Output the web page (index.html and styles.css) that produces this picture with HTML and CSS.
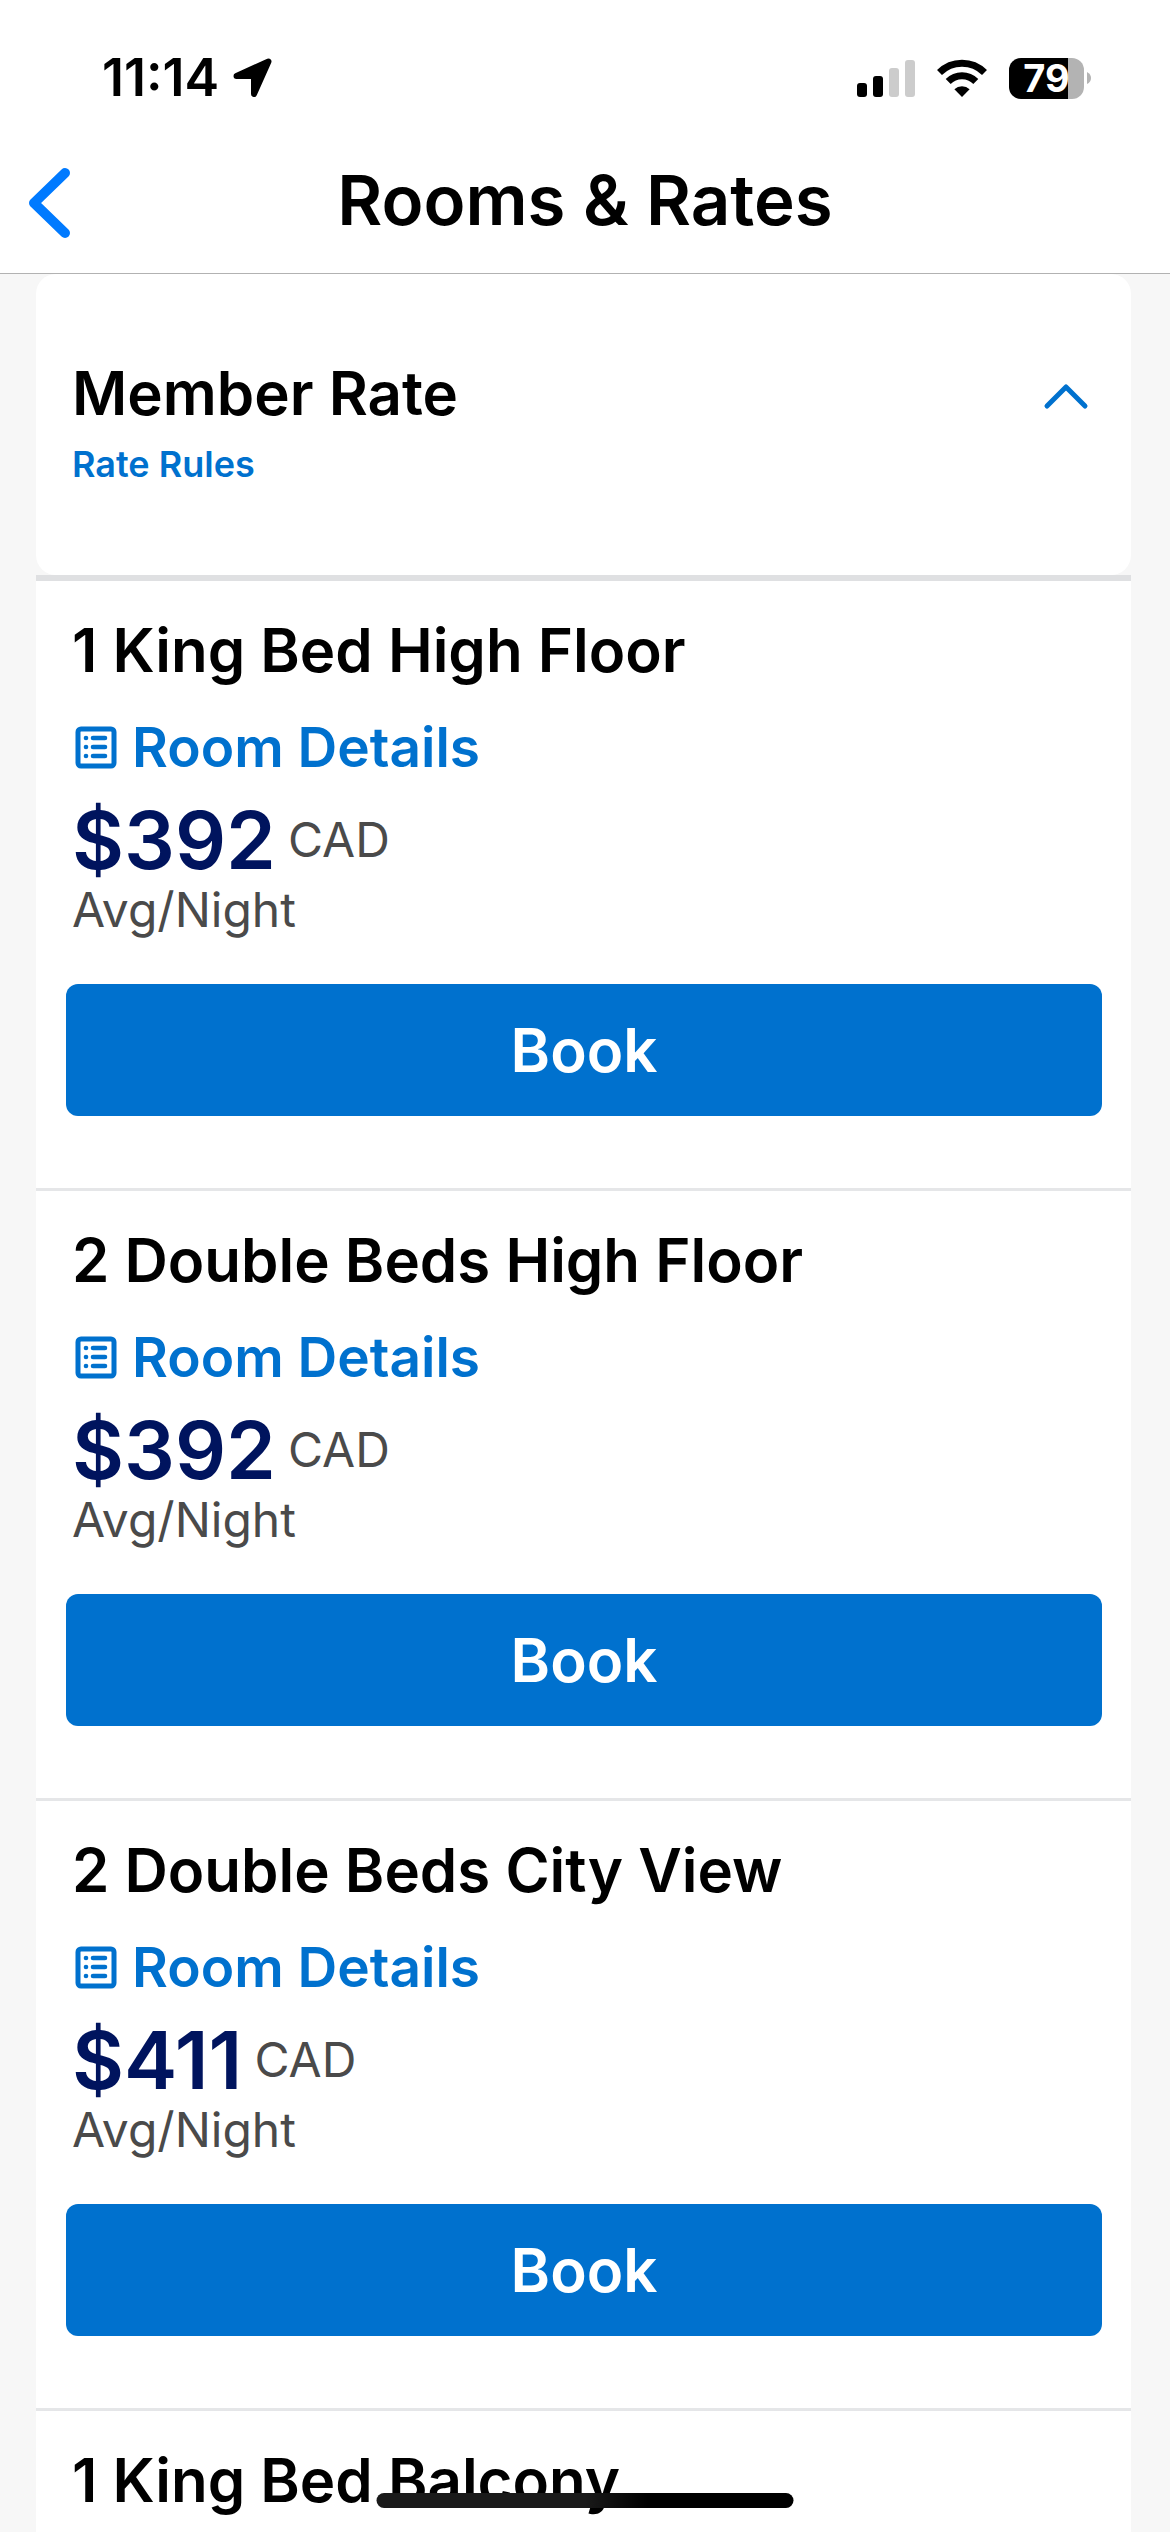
FILE: index.html
```html
<!DOCTYPE html>
<html lang="en">
<head>
  <meta charset="UTF-8">
  <meta name="viewport" content="width=device-width, initial-scale=1.0">
  <title>Rooms &amp; Rates</title>
  <link rel="stylesheet" href="styles.css">
</head>
<body>
  <svg class="sprite" aria-hidden="true">
    <symbol id="icon-list" viewBox="0 0 48 48">
      <rect x="6" y="6" width="36" height="37" rx="3" fill="none" stroke="currentColor" stroke-width="5"/>
      <path d="M21 15h12M21 24h12M21 33h12" fill="none" stroke="currentColor" stroke-width="4.6" stroke-linecap="round"/>
      <circle cx="14" cy="15" r="2.3" fill="currentColor"/>
      <circle cx="14" cy="24" r="2.3" fill="currentColor"/>
      <circle cx="14" cy="33" r="2.3" fill="currentColor"/>
    </symbol>
  </svg>

  <div class="screen">
    <header class="header">
      <div class="status-bar">
        <div class="status-left">
          <span class="time">11:14</span>
          <svg class="location" viewBox="0 0 40 40" aria-hidden="true">
            <path d="M3.500 18 35.500 3.500 21 36V18Z" stroke="#000" stroke-width="6" stroke-linejoin="round"/>
          </svg>
        </div>
        <div class="status-right">
          <svg class="signal" viewBox="0 0 58 38" aria-hidden="true">
            <rect x="0" y="24" width="10" height="14" rx="3"/>
            <rect x="16" y="17" width="10" height="21" rx="3"/>
            <rect x="32" y="9" width="10" height="29" rx="3" fill="#ccc"/>
            <rect x="48" y="1" width="10" height="37" rx="3" fill="#ccc"/>
          </svg>
          <svg class="wifi" viewBox="0 0 50 38" aria-hidden="true">
            <path d="M2.500 13.500a31.800 31.800 0 0 1 45 0M11.200 22.500a19.500 19.500 0 0 1 27.600 0" fill="none" stroke="#000" stroke-width="7"/>
            <path d="M25 38 17.400 30.200a11 11 0 0 1 15.200 0Z"/>
          </svg>
          <div class="battery">
            <span class="battery-level">79</span>
            <svg class="battery-tip" viewBox="0 0 4 12" aria-hidden="true">
              <path d="M0 0Q4 2 4 6T0 12Z" fill="#b3b3b3"/>
            </svg>
          </div>
        </div>
      </div>
      <div class="nav-bar">
        <button class="back-button" type="button" aria-label="Back">
          <svg viewBox="0 0 42 80" aria-hidden="true">
            <path d="M37 13 6 43 37 73" fill="none" stroke="currentColor" stroke-width="10" stroke-linecap="round" stroke-linejoin="round"/>
          </svg>
        </button>
        <h1>Rooms &amp; Rates</h1>
      </div>
    </header>

    <main class="content">
      <section class="rate-card">
        <div>
          <h2>Member Rate</h2>
          <a class="rate-rules" href="#">Rate Rules</a>
        </div>
        <button class="collapse-button" type="button" aria-label="Collapse">
          <svg viewBox="0 0 46 28" aria-hidden="true">
            <path d="M4 24 23 5 42 24" fill="none" stroke="currentColor" stroke-width="5" stroke-linecap="round" stroke-linejoin="round"/>
          </svg>
        </button>
      </section>

      <section class="room">
        <h3>1 King Bed High Floor</h3>
        <a class="details" href="#"><svg aria-hidden="true"><use href="#icon-list"/></svg>Room Details</a>
        <p class="price"><strong>$392</strong> <span>CAD</span></p>
        <p class="per-night">Avg/Night</p>
        <button class="book-button" type="button">Book</button>
      </section>

      <section class="room">
        <h3>2 Double Beds High Floor</h3>
        <a class="details" href="#"><svg aria-hidden="true"><use href="#icon-list"/></svg>Room Details</a>
        <p class="price"><strong>$392</strong> <span>CAD</span></p>
        <p class="per-night">Avg/Night</p>
        <button class="book-button" type="button">Book</button>
      </section>

      <section class="room">
        <h3>2 Double Beds City View</h3>
        <a class="details" href="#"><svg aria-hidden="true"><use href="#icon-list"/></svg>Room Details</a>
        <p class="price"><strong>$411</strong> <span>CAD</span></p>
        <p class="per-night">Avg/Night</p>
        <button class="book-button" type="button">Book</button>
      </section>

      <section class="room">
        <h3>1 King Bed Balcony</h3>
      </section>
    </main>

    <div class="home-indicator"></div>
  </div>
</body>
</html>
```
FILE: styles.css
```css
* {
  box-sizing: border-box;
}

body {
  margin: 0;
  font-family: Inter, "Liberation Sans", sans-serif;
  background-color: #f7f7f7;
  color: #000;
}

h1, h2, h3, p {
  margin: 0;
}

button {
  padding: 0;
  border: none;
  background: none;
  font-family: inherit;
  cursor: pointer;
}

a {
  color: #0071ce;
  text-decoration: none;
}

svg {
  display: block;
  flex: none;
}

.sprite {
  display: none;
}

.screen {
  display: flex;
  flex-direction: column;
  height: 100vh;
  overflow: hidden;
}

/* Header */
.header {
  flex: none;
  background-color: #fff;
  border-bottom: 1px solid #b2b2b2;
}

.status-bar {
  display: flex;
  justify-content: space-between;
  align-items: center;
  padding: 48px 79px 0 102px;
}

.status-left,
.status-right {
  display: flex;
  align-items: center;
}

.status-left {
  gap: 14px;
}

.status-right {
  gap: 22px;
}

.time {
  font-size: 52px;
  font-weight: 600;
  line-height: 60px;
}

.location {
  width: 40px;
  height: 40px;
}

.signal {
  width: 58px;
  height: 38px;
}

.wifi {
  width: 50px;
  height: 38px;
}

.battery {
  display: flex;
  align-items: center;
  gap: 3px;
}

.battery-level {
  width: 75px;
  border-radius: 12px;
  background: linear-gradient(to right, #000 79%, #b3b3b3 79%);
  color: #fff;
  font-size: 38px;
  font-weight: 700;
  line-height: 41px;
  text-align: center;
}

.battery-tip {
  width: 4px;
  height: 12px;
}

.nav-bar {
  display: grid;
  grid-template-columns: 120px 1fr 120px;
  align-items: center;
  padding: 47px 0 28px;
}

.nav-bar h1 {
  font-size: 69px;
  font-weight: 600;
  line-height: 90px;
  text-align: center;
}

.back-button {
  padding-left: 28px;
  color: #007aff;
}

.back-button svg {
  width: 42px;
  height: 80px;
}

/* Rates */
.content {
  flex: 1;
  min-height: 0;
  padding: 0 39px 0 36px;
}

.rate-card {
  display: flex;
  justify-content: space-between;
  align-items: flex-start;
  padding: 82px 42px 90px 36px;
  border-radius: 20px;
  background-color: #fff;
}

.rate-card h2,
.room h3 {
  font-size: 60px;
  font-weight: 600;
  line-height: 74px;
}

.rate-rules {
  display: block;
  margin-top: 13px;
  font-size: 36px;
  font-weight: 600;
  line-height: 42px;
}

.collapse-button {
  padding-top: 26px;
  color: #0071ce;
}

.collapse-button svg {
  width: 46px;
  height: 28px;
}

.room {
  padding: 32px 29px 72px 30px;
  border-bottom: 3px solid #e5e6e8;
  background-color: #fff;
}

.rate-card + .room {
  border-top: 6px solid #dfe0e2;
}

.room h3,
.details,
.price,
.per-night {
  padding-left: 6px;
}

.details {
  display: flex;
  align-items: center;
  gap: 12px;
  margin-top: 27px;
  font-size: 55px;
  font-weight: 600;
  line-height: 66px;
}

.details svg {
  width: 48px;
  height: 48px;
}

.price {
  display: flex;
  align-items: center;
  gap: 12px;
  margin-top: 20px;
  color: #4a4a4a;
  font-size: 48px;
  line-height: 60px;
}

.price strong {
  color: #00145e;
  font-size: 80px;
  font-weight: 600;
  line-height: 80px;
}

.per-night {
  color: #4a4a4a;
  font-size: 48px;
  line-height: 60px;
}

.book-button {
  display: block;
  width: 100%;
  margin-top: 44px;
  border-radius: 12px;
  background-color: #0071ce;
  color: #fff;
  font-size: 60px;
  font-weight: 600;
  line-height: 132px;
}

.home-indicator {
  position: fixed;
  bottom: 24px;
  left: 50%;
  width: 417px;
  height: 15px;
  border-radius: 8px;
  background: linear-gradient(to right, #1a1a1a 50%, #000 65%);
  transform: translateX(-50%);
}
```
